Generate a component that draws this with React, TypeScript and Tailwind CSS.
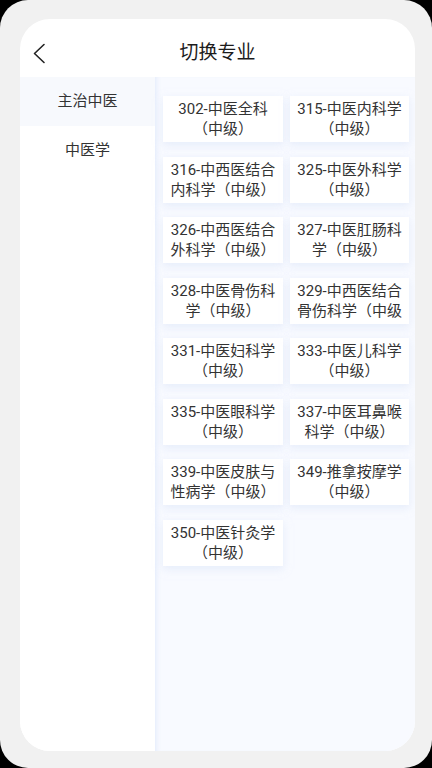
import { useState } from "react";

// \u200B before the closing paren lets it drop to the next (hidden) line, like the app does
const groups = [
  {
    name: "主治中医",
    items: [
      "302-中医全科（中级\u200B）",
      "315-中医内科学（中级\u200B）",
      "316-中西医结合内科学（中级\u200B）",
      "325-中医外科学（中级\u200B）",
      "326-中西医结合外科学（中级\u200B）",
      "327-中医肛肠科学（中级\u200B）",
      "328-中医骨伤科学（中级\u200B）",
      "329-中西医结合骨伤科学（中级\u200B）",
      "331-中医妇科学（中级\u200B）",
      "333-中医儿科学（中级\u200B）",
      "335-中医眼科学（中级\u200B）",
      "337-中医耳鼻喉科学（中级\u200B）",
      "339-中医皮肤与性病学（中级\u200B）",
      "349-推拿按摩学（中级\u200B）",
      "350-中医针灸学（中级\u200B）",
    ],
  },
  { name: "中医学", items: [] as string[] },
];

export default function App() {
  const [active, setActive] = useState(0);

  return (
    <div
      className="w-[432px] h-[768px] bg-black"
      style={{ fontFamily: 'Roboto, "Noto Sans CJK SC", sans-serif' }}
    >
      <div className="h-full rounded-[28px] bg-[#f1f1f1] pt-[19px] pl-[20px] pr-[17px] pb-[17px]">
        <div className="h-[732px] rounded-[30px] bg-white overflow-hidden flex flex-col">
          <div className="h-[58px] shrink-0 pt-[8px] flex items-center relative">
            <button className="absolute left-[10px] top-[22px] p-0.5">
              <svg width="14" height="21" viewBox="0 0 14 21" fill="none">
                <path
                  d="M12 1.5L2.5 10.5l9.5 9"
                  stroke="#222"
                  strokeWidth="1.6"
                  strokeLinecap="round"
                  strokeLinejoin="round"
                />
              </svg>
            </button>
            <h1 className="flex-1 text-center text-[19px] leading-none text-[#1c1c1c]">
              切换专业
            </h1>
          </div>

          <div className="flex-1 flex min-h-0">
            <div className="w-[135px] shrink-0 bg-white">
              {groups.map((g, i) => (
                <div
                  key={g.name}
                  onClick={() => setActive(i)}
                  className={
                    "h-[49px] flex items-center justify-center text-[15px] text-[#333] " +
                    (i === active ? "bg-[#f7f9fd]" : "bg-white")
                  }
                >
                  {g.name}
                </div>
              ))}
            </div>

            <div className="flex-1 bg-[#f8faff] shadow-[inset_5px_0_5px_-4px_rgba(220,230,250,0.9)] pl-[8px] pr-[6px] pt-[19px]">
              <div className="grid grid-cols-[120px_119px] gap-x-[7px] gap-y-[14.5px]">
                {groups[active].items.map((t) => (
                  <div
                    key={t}
                    className="h-[46px] bg-white px-[3px] pt-[3px] shadow-[0_3px_8px_rgba(215,225,245,0.55)]"
                  >
                    <div className="h-[40px] overflow-hidden text-center text-[15px] leading-[20px] text-[#333] [text-spacing-trim:space-all]">
                      {t}
                    </div>
                  </div>
                ))}
              </div>
            </div>
          </div>
        </div>
      </div>
    </div>
  );
}
